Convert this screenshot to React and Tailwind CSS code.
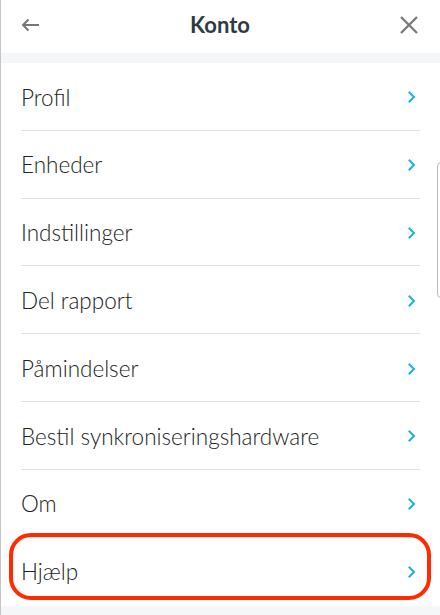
import React from "react";

const items = [
  "Profil",
  "Enheder",
  "Indstillinger",
  "Del rapport",
  "Påmindelser",
  "Bestil synkroniseringshardware",
  "Om",
];

function Chevron() {
  return (
    <svg width="8" height="12" viewBox="0 0 8 12" fill="none" className="shrink-0">
      <path d="M1.5 1.5 L6 6 L1.5 10.5" stroke="#1cb0e6" strokeWidth="2" strokeLinecap="square" />
    </svg>
  );
}

function Row({ label }) {
  return (
    <div className="flex h-[66.8px] items-center justify-between pl-5 pr-6 pt-[2px]">
      <span className="text-[22.5px] font-light text-[#222]">{label}</span>
      <Chevron />
    </div>
  );
}

export default function App() {
  return (
    <div
      className="relative h-[615px] w-[440px] overflow-hidden border-l border-[#c4c4c4] bg-[#f5f6f8]"
      style={{ fontFamily: "Lato, 'Noto Sans', sans-serif" }}
    >
      {/* header */}
      <div className="flex h-[53px] items-center justify-between bg-white pb-[4px] pl-5 pr-[22px]">
        <svg width="19" height="14" viewBox="0 0 19 14" fill="none">
          <path d="M18 7 H2.5 M7.5 1.5 L2 7 L7.5 12.5" stroke="#777" strokeWidth="2" />
        </svg>
        <h1 className="text-[22px] font-bold text-[#2e3a44]">Konto</h1>
        <svg width="18" height="18" viewBox="0 0 18 18" fill="none">
          <path d="M1 1 L17 17 M17 1 L1 17" stroke="#777" strokeWidth="2.2" />
        </svg>
      </div>

      <div className="mt-[10px] bg-white pb-[2px]">
        {items.map((label) => (
          <div key={label}>
            <Row label={label} />
            <div className="mx-5 h-px bg-[#e2e2e2]" />
          </div>
        ))}
        <Row label="Hjælp" />
      </div>

      {/* red highlight around Hjælp */}
      <div className="absolute left-[8px] top-[533px] h-[67px] w-[422px] rounded-[22px] border-4 border-[#ff2a00]" />

      {/* side handle peeking in from the right */}
      <div className="absolute left-[436px] top-[162px] h-[136px] w-[12px] rounded-[4px] border border-[#bbb] bg-white" />
    </div>
  );
}
